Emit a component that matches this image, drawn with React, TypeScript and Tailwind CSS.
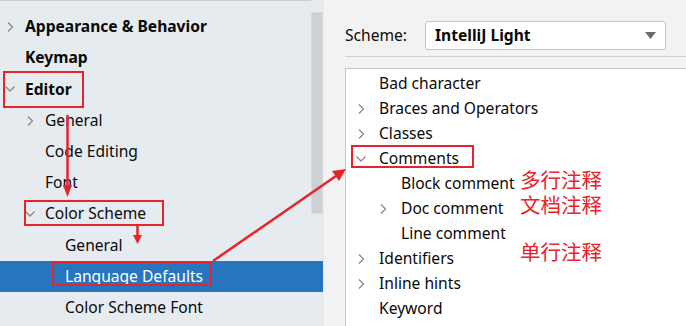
import React from 'react';

type Node = { label: string; level: number; chevron?: 'right' | 'down'; bold?: boolean; selected?: boolean };

const leftTree: Node[] = [
    { label: 'Appearance & Behavior', level: 0, chevron: 'right', bold: true },
    { label: 'Keymap', level: 0, bold: true },
    { label: 'Editor', level: 0, chevron: 'down', bold: true },
    { label: 'General', level: 1, chevron: 'right' },
    { label: 'Code Editing', level: 1 },
    { label: 'Font', level: 1 },
    { label: 'Color Scheme', level: 1, chevron: 'down' },
    { label: 'General', level: 2 },
    { label: 'Language Defaults', level: 2, selected: true },
    { label: 'Color Scheme Font', level: 2 },
];

const rightTree: Node[] = [
    { label: 'Bad character', level: 0 },
    { label: 'Braces and Operators', level: 0, chevron: 'right' },
    { label: 'Classes', level: 0, chevron: 'right' },
    { label: 'Comments', level: 0, chevron: 'down' },
    { label: 'Block comment', level: 1 },
    { label: 'Doc comment', level: 1, chevron: 'right' },
    { label: 'Line comment', level: 1 },
    { label: 'Identifiers', level: 0, chevron: 'right' },
    { label: 'Inline hints', level: 0, chevron: 'right' },
    { label: 'Keyword', level: 0 },
];

const Chevron = ({ dir }: { dir: 'right' | 'down' }) =>
    dir === 'right' ? (
        <svg width="10" height="12" viewBox="0 0 10 12" className="shrink-0">
            <path d="M3 1.5 L7.5 6 L3 10.5" fill="none" stroke="#8a8a8a" strokeWidth="1.3" />
        </svg>
    ) : (
        <svg width="10" height="12" viewBox="0 0 10 12" className="shrink-0">
            <path d="M0.5 3.5 L5 8 L9.5 3.5" fill="none" stroke="#8a8a8a" strokeWidth="1.3" />
        </svg>
    );

const App: React.FC = () => {
    return (
        <div
            className="relative flex w-[686px] h-[326px] overflow-hidden text-[15.6px] text-[#0a0a0a]"
            style={{ fontFamily: '"Noto Sans", "Noto Sans CJK SC", sans-serif' }}
        >
            {/* Settings tree */}
            <div className="flex w-[324px] shrink-0 bg-[#e6ebf0]">
                <div className="w-[311px] shrink-0 border-t border-[#c8cdd2] pt-[10.5px]">
                    {leftTree.map((n, i) => (
                        <div
                            key={i}
                            className={`flex items-center h-[31.2px] w-[323px] ${n.selected ? 'bg-[#2675bf] text-white' : ''}`}
                            style={{ paddingLeft: 5 + n.level * 20 }}
                        >
                            <div className="w-[20px] flex items-center">
                                {n.chevron && <Chevron dir={n.chevron} />}
                            </div>
                            <span className={`leading-none ${n.bold ? 'font-bold' : ''}`}>{n.label}</span>
                        </div>
                    ))}
                </div>
                <div className="w-[13px] pt-[12px]">
                    <div className="h-[202px] w-[12px] bg-[#cdd1d6] border border-[#d9dde1]" />
                </div>
            </div>

            {/* Scheme panel */}
            <div className="flex-1 flex flex-col bg-[#f2f2f2] pl-[21px] pt-[21px]">
                <div className="flex items-center h-[29px]">
                    <span className="w-[80px]">Scheme:</span>
                    <div className="flex items-center justify-between w-[241px] h-[29px] bg-white border border-[#c4c4c4] rounded-[3px] pl-[9px] pr-[9px]">
                        <span className="font-bold">IntelliJ Light</span>
                        <svg width="11" height="7" viewBox="0 0 11 7">
                            <path d="M0 0 H11 L5.5 7 Z" fill="#6b6b6b" />
                        </svg>
                    </div>
                </div>
                <div className="mt-[6px] h-[1px] bg-[#d0d0d0]" />
                <div className="relative mt-[11px] flex-1 bg-white border-t border-l border-[#c9c9c9] pt-[2px]">
                    {rightTree.map((n, i) => (
                        <div key={i} className="flex items-center h-[25px]" style={{ paddingLeft: 10 + n.level * 22 }}>
                            <div className="w-[23px] flex items-center">
                                {n.chevron && <Chevron dir={n.chevron} />}
                            </div>
                            <span className="leading-none">{n.label}</span>
                        </div>
                    ))}
                    <div
                        className="absolute left-[174px] top-[98px] text-[20.5px] leading-[24.5px] text-[#e8232b]"
                        style={{ fontFamily: '"Noto Sans CJK SC", sans-serif' }}
                    >
                        <div>多行注释</div>
                        <div>文档注释</div>
                        <div className="mt-[23px]">单行注释</div>
                    </div>
                </div>
            </div>

            {/* Red annotations */}
            <svg className="absolute inset-0 pointer-events-none" width="686" height="326" viewBox="0 0 686 326">
                <g fill="none" stroke="#e8232b" strokeWidth="2">
                    <rect x="4" y="72" width="79" height="35" />
                    <rect x="25" y="201" width="138" height="24" />
                    <rect x="53" y="262" width="158" height="23" />
                    <rect x="352" y="146" width="121" height="21" />
                    <line x1="67.5" y1="115" x2="67.5" y2="186" strokeWidth="2.5" />
                    <line x1="137.5" y1="226" x2="137.5" y2="236" strokeWidth="2.5" />
                    <line x1="213" y1="261" x2="336" y2="176" strokeWidth="2.5" />
                </g>
                <g fill="#e8232b">
                    <path d="M63 185 L72 185 L67.5 197 Z" />
                    <path d="M133 235 L142 235 L137.5 244 Z" />
                    <path d="M346 169 L332 171 L339 181 Z" />
                </g>
            </svg>
        </div>
    );
};

export default App;
